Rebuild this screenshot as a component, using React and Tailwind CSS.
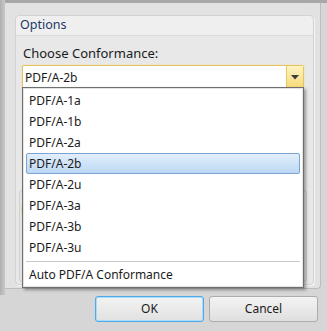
import React from "react";

const items = ["PDF/A-1a", "PDF/A-1b", "PDF/A-2a", "PDF/A-2b", "PDF/A-2u", "PDF/A-3a", "PDF/A-3b", "PDF/A-3u"];

export default function App() {
  return (
    <div
      className="relative w-[327px] h-[331px] overflow-hidden bg-[#d6d6d6] pt-[3px] pl-[5px] pr-[6px]"
      style={{ fontFamily: '"Noto Sans", "Open Sans", sans-serif' }}
    >
      <div className="absolute left-0 top-0 w-[327px] h-[3px] bg-[#a8a8a8]" />
      <div className="absolute left-0 top-0 w-[5px] h-[295px] bg-gradient-to-r from-[#b0b0b0] to-[#c8c8c8]" />
      {/* main panel */}
      <div className="relative h-[286px] bg-[#e2e2e2] border-r border-b border-[#bdbdbd] rounded-br-[4px] pt-[12px] pl-[10px] pr-[6px] pb-[3px]">
        <div className="h-full flex flex-col rounded-[4px] bg-[#e8e8e8] border border-[#d2d2d2] shadow-[1px_1px_0_#f4f4f4]">
          <div className="h-[20px] flex items-center px-[4px] bg-[#efefef] rounded-t-[4px] border-b border-[#dcdcdc] text-[12.5px] text-[#1f3766] leading-none">
            Options
          </div>
          <div className="flex-1 flex flex-col pl-[6px] pr-[9px] pt-[9px]">
            <div className="text-[13px] leading-[16px] text-[#1b1b1b] pl-[1px]">Choose Conformance:</div>
            <div className="mt-[4px] h-[25px] flex items-stretch bg-white border border-[#e5c365] rounded-[2px] shadow-[0_0_2px_#f3dd90]">
              <div className="flex-1 flex items-center pl-[2px] text-[12px] text-[#1b1b1b]">PDF/A-2b</div>
              <div className="w-[17px] flex items-center justify-center bg-gradient-to-b from-[#fff3c2] to-[#f6d872] border-l border-[#e7c76a]">
                <svg width="8" height="5" viewBox="0 0 8 5">
                  <path d="M0 0 H8 L4 4.5 Z" fill="#3d3d3d" />
                </svg>
              </div>
            </div>
            <div className="mt-[100px] mx-[-3px] h-[92px] rounded-[3px] border border-[#d0d0d0] bg-[#e6e6e6] pt-[10px] pl-[1px] text-[12px] text-[#1b1b1b]">
              F
            </div>
          </div>
        </div>
      </div>
      {/* buttons */}
      <div className="flex justify-end gap-[5px] pr-[3px] mt-[7px]">
        <button className="w-[109px] h-[26px] rounded-[3px] border border-[#4ea9e6] shadow-[inset_0_0_0_1px_#a9dcf8] bg-gradient-to-b from-[#f3f3f3] to-[#e1e1e1] text-[12px] text-[#1b1b1b]">
          OK
        </button>
        <button className="w-[109px] h-[26px] rounded-[3px] border border-[#acacac] bg-gradient-to-b from-[#f3f3f3] to-[#dfdfdf] text-[12px] text-[#1b1b1b]">
          Cancel
        </button>
      </div>
      {/* dropdown list */}
      <div className="absolute left-[22px] top-[87px] w-[282px] h-[201px] bg-white border border-[#6f6f6f] shadow-[2px_2px_3px_rgba(0,0,0,0.35)]">
        <div className="h-full border border-[#e4e4e4] pt-[1px] px-[2px] text-[12px] text-[#1b1b1b]">
          {items.map((t) => (
            <div
              key={t}
              className={
                t === "PDF/A-2b"
                  ? "h-[21px] flex items-center pl-[2px] rounded-[2px] border border-[#7ca4d3] bg-gradient-to-b from-[#e2eefc] to-[#bcd8f3]"
                  : "h-[21px] flex items-center pl-[2px] border border-transparent"
              }
            >
              {t}
            </div>
          ))}
          <div className="h-[6px] flex items-center">
            <div className="w-full h-px bg-[#c9c9c9]" />
          </div>
          <div className="h-[21px] flex items-center pl-[3px]">Auto PDF/A Conformance</div>
        </div>
      </div>
    </div>
  );
}
